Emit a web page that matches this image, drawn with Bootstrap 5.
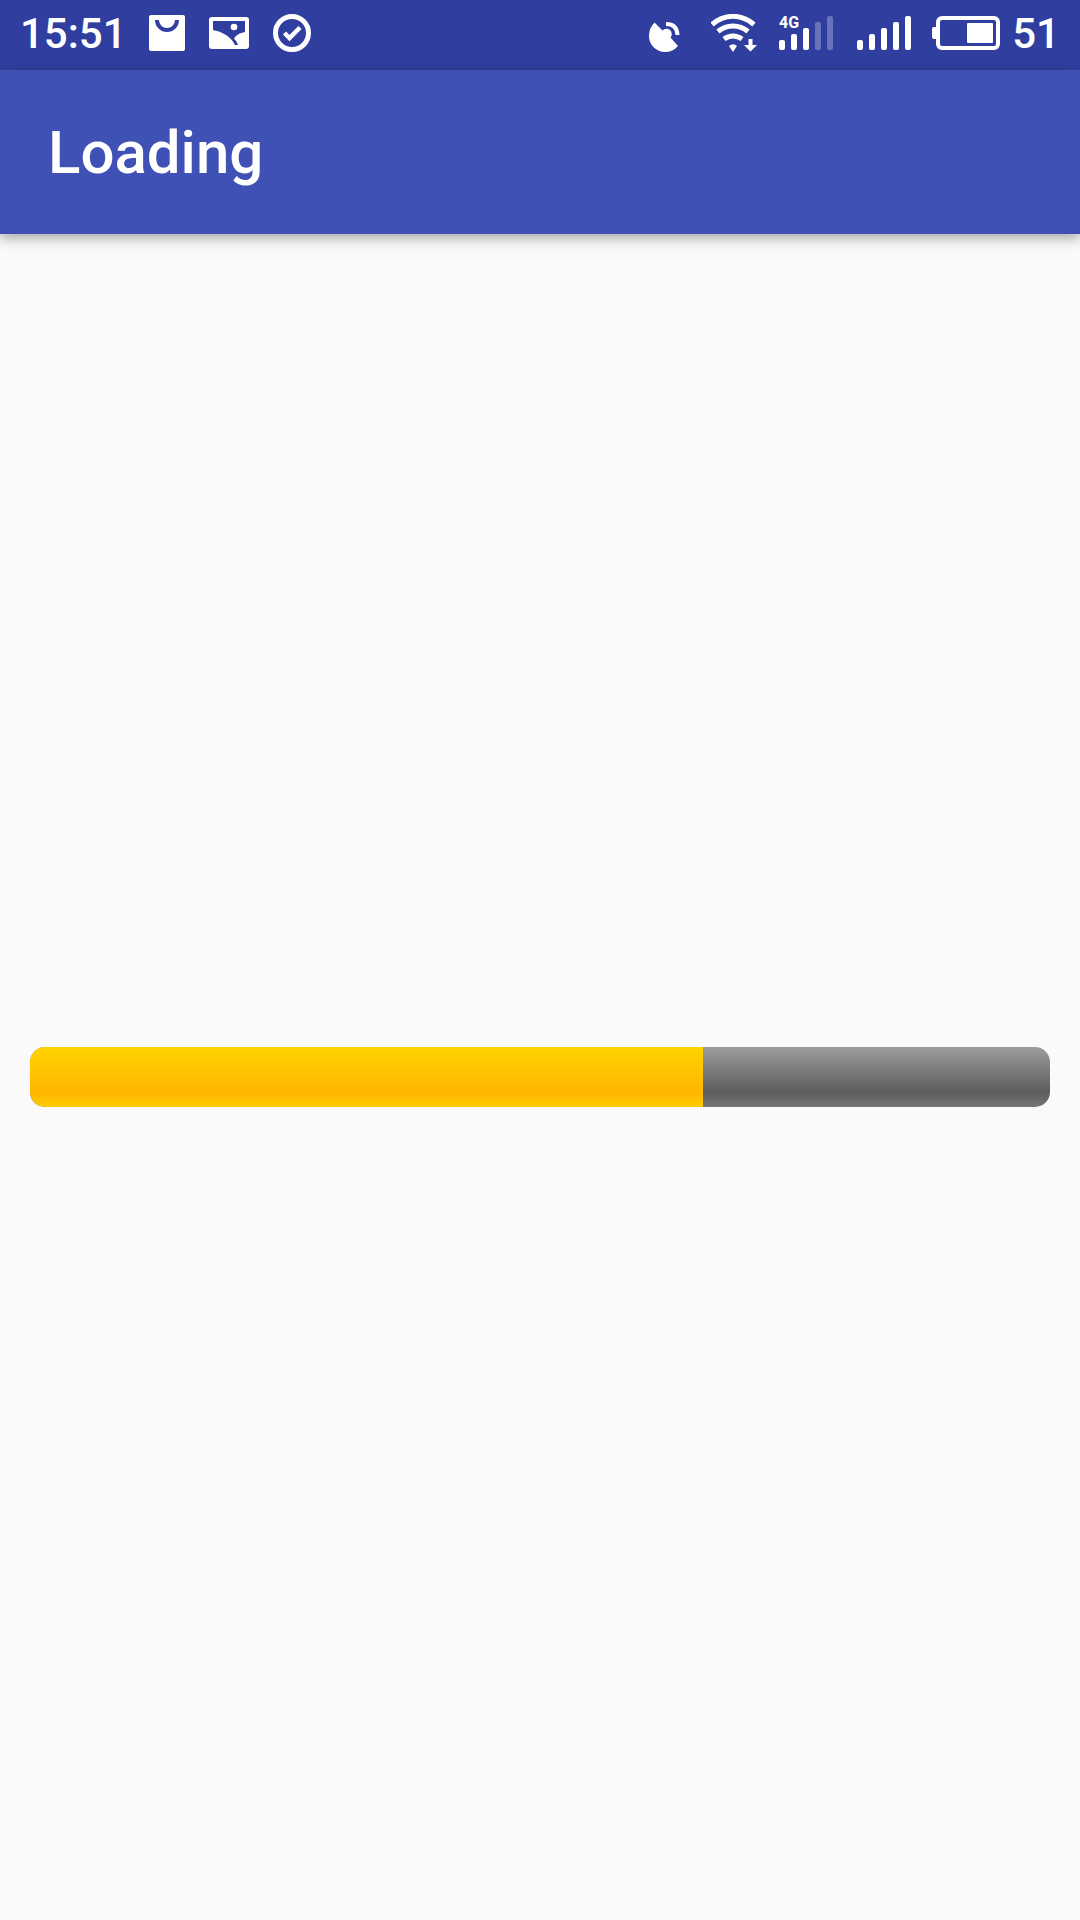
<!DOCTYPE html>
<html lang="en">
<head>
<meta charset="utf-8">
<meta name="viewport" content="width=device-width, initial-scale=1">
<title>Loading</title>
<link href="https://cdn.jsdelivr.net/npm/bootstrap@5.3.0/dist/css/bootstrap.min.css" rel="stylesheet">
<style>
  body { background: #fafafa; font-family: Roboto, "Noto Sans", sans-serif; }
  .status-bar { background: #303f9f; height: 70px; padding: 0 20px 2px; font-size: 42px; line-height: 48px; font-weight: 500; }
  .status-bar svg { display: block; flex: none; fill: #fff; }
  .status-left, .status-right { gap: 22px; }
  .notice-icons { gap: 24px; }
  .battery-group { gap: 12px; }
  .app-bar { background: #3f51b5; height: 164px; padding: 2px 48px 0; box-shadow: 0 4px 12px rgba(0, 0, 0, .34); }
  .app-title { font-size: 60px; line-height: 72px; font-weight: 500; }
  .content-area { padding: 0 30px; }
  .load-track { --bs-progress-height: 60px; --bs-progress-border-radius: 15px; background: linear-gradient(#9d9e9d, #5a5d5a 75%, #747674); }
  .load-fill { background: linear-gradient(#ffd300, #ffb600 75%, #ffcb00); }
</style>
</head>
<body class="d-flex flex-column min-vh-100">
  <header>
    <div class="status-bar d-flex align-items-center justify-content-between text-white">
      <div class="status-left d-flex align-items-center">
        <time>15:51</time>
        <div class="notice-icons d-flex align-items-center">
          <svg width="36" height="40" viewBox="149 14 36 40" role="img" aria-label="Shop">
            <rect x="149" y="15" width="36" height="36" rx="2"/>
            <path d="M157 20a10 10 0 0 0 20 0" fill="none" stroke="#303f9f" stroke-width="4"/>
          </svg>
          <svg width="40" height="40" viewBox="209 14 40 40" role="img" aria-label="Picture">
            <rect x="209" y="17" width="40" height="32" rx="3"/>
            <path fill="#303f9f" d="M213 21h32v11q-6 1-9 4-1.500 1.500-2 2.500 3 3 4 6.500h-3q-3-6-9-10-6-4-13-5z"/>
            <circle cx="234" cy="27" r="3.300"/>
          </svg>
          <svg width="38" height="40" viewBox="273 14 38 40" role="img" aria-label="Done">
            <circle cx="292" cy="33" r="16.500" fill="none" stroke="#fff" stroke-width="5"/>
            <path d="M284.500 33l5 5 10.500-10.500" fill="none" stroke="#fff" stroke-width="4.500"/>
          </svg>
        </div>
      </div>
      <div class="status-right d-flex align-items-center">
        <svg width="40" height="40" viewBox="649 14 40 40" role="img" aria-label="Location">
          <path d="M654.500 22.500l8 8a5 5 0 0 1 8 7l7.500 8.500a17 17 0 0 1-13 6 16 16 0 0 1-16-16q0-8 5.500-13.500z"/>
          <path d="M666 24q11 0 11.500 11" fill="none" stroke="#fff" stroke-width="4"/>
        </svg>
        <svg width="46" height="40" viewBox="711 14 46 40" role="img" aria-label="Wi-Fi">
          <g fill="none" stroke="#fff" stroke-width="5">
            <path d="M712 24.500q9.500-8.200 21-8.200t21 8.200"/>
            <path d="M718 31.500q6.500-5.500 15-5.500t15 5.500"/>
            <path d="M724 39q4-3 9-3t9 3"/>
          </g>
          <path d="M729 46q4-3.500 8 0l-4 6z"/>
          <path d="M748.500 39h4v6h4.500l-6.500 6.500-6.500-6.500h4.500z"/>
        </svg>
        <svg width="56" height="48" viewBox="779 10 56 48" role="img" aria-label="4G signal">
          <text x="779" y="28" font-family="Roboto, sans-serif" font-size="16" font-weight="700">4G</text>
          <rect x="779" y="40" width="6" height="10" rx="2"/>
          <rect x="791" y="34" width="6" height="16" rx="2"/>
          <rect x="803" y="28" width="6" height="22" rx="2"/>
          <rect x="815" y="22" width="6" height="28" rx="2" opacity=".27"/>
          <rect x="827" y="16" width="6" height="34" rx="2" opacity=".27"/>
        </svg>
        <svg width="53" height="40" viewBox="857 14 53 40" overflow="visible" role="img" aria-label="Signal">
          <rect x="857" y="40" width="6" height="10" rx="2"/>
          <rect x="869" y="34" width="6" height="16" rx="2"/>
          <rect x="881" y="28" width="6" height="22" rx="2"/>
          <rect x="893" y="22" width="6" height="28" rx="2"/>
          <rect x="905" y="16" width="6" height="34" rx="2"/>
        </svg>
        <div class="battery-group d-flex align-items-center">
          <svg width="68" height="40" viewBox="932 14 68 40" role="img" aria-label="Battery">
            <rect x="938" y="18" width="60" height="30" rx="4" fill="none" stroke="#fff" stroke-width="4"/>
            <rect x="932" y="27" width="6" height="12" rx="2"/>
            <rect x="967" y="23" width="26" height="20" rx="1"/>
          </svg>
          <span>51</span>
        </div>
      </div>
    </div>
    <div class="app-bar d-flex align-items-center text-white">
      <h1 class="app-title mb-0">Loading</h1>
    </div>
  </header>
  <main class="content-area flex-grow-1 d-flex flex-column justify-content-center">
    <div class="progress load-track" role="progressbar" aria-label="Loading" aria-valuenow="66" aria-valuemin="0" aria-valuemax="100">
      <div class="progress-bar load-fill" style="width: 66%"></div>
    </div>
  </main>
<script src="https://cdn.jsdelivr.net/npm/bootstrap@5.3.0/dist/js/bootstrap.bundle.min.js"></script>
</body>
</html>
